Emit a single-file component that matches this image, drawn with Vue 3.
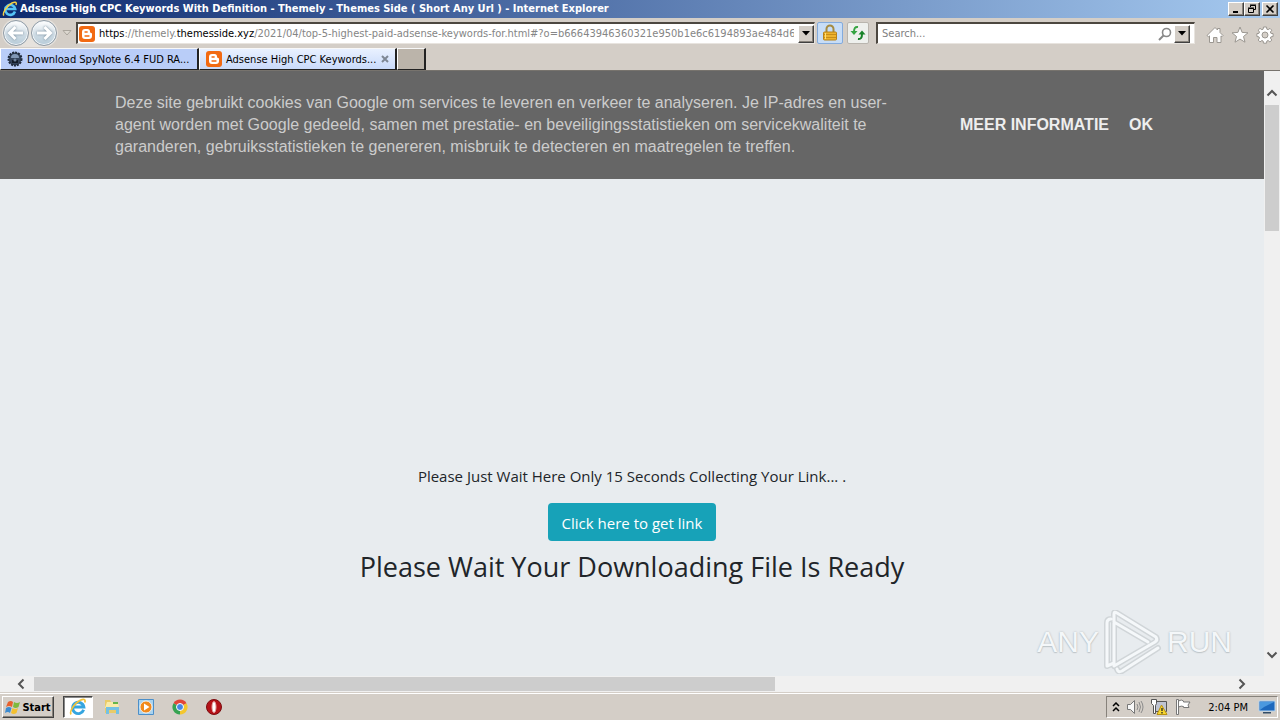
<script setup>
import { ref } from 'vue'

const query = ref('')
const host = 'themesside.xyz'
const path = '/2021/04/top-5-highest-paid-adsense-keywords-for.html#?o=b66643946360321e950b1e6c6194893ae484d65bc'
</script>

<template>
  <div class="desktop">
    <header class="titlebar">
      <svg class="i16" viewBox="0 0 16 16" aria-hidden="true">
        <path d="M13 10.500A5 5 0 1 1 13.200 8H4" fill="none" stroke="#55c3f5" stroke-width="2.600" />
        <path d="M2 14.500C0 13 4 5 10 2c3-1.500 5-1 4 2" fill="none" stroke="#f5cf45" stroke-width="1.500" />
      </svg>
      <h1>Adsense High CPC Keywords With Definition - Themely - Themes Side ( Short Any Url ) - Internet Explorer</h1>
      <div class="winbtns">
        <button class="raised" aria-label="Minimize"><svg viewBox="0 0 12 10"><path d="M3 7h5v2H3z" /></svg></button>
        <button class="raised" aria-label="Restore"><svg viewBox="0 0 12 10"><path d="M4.500 3V1.500h5v4H8M4 1h6M2.500 4.500h5v4h-5zM2 4h6" fill="none" stroke="#000" /></svg></button>
        <button class="raised close" aria-label="Close"><svg viewBox="0 0 12 10"><path d="M2.500 1.500l7 7M9.500 1.500l-7 7" fill="none" stroke="#000" stroke-width="1.600" /></svg></button>
      </div>
    </header>

    <nav class="navbar">
      <div class="history">
        <button class="round" aria-label="Back"><svg viewBox="0 0 24 24"><path d="M19 12H6M11.500 6L5.500 12l6 6" /></svg></button>
        <button class="round" aria-label="Forward"><svg viewBox="0 0 24 24"><path d="M5 12h13M12.500 6l6 6-6 6" /></svg></button>
      </div>
      <button class="recent" aria-label="Recent pages"><svg viewBox="0 0 10 6"><path d="M1 .5h8l-4 4.500z" fill="#ddd8d0" stroke="#aaa59d" /></svg></button>
      <div class="field address">
        <svg class="i16" viewBox="0 0 16 16" aria-hidden="true">
          <rect width="16" height="16" rx="3" fill="#f26a12" />
          <path d="M6 3h2.500A2.500 2.500 0 0 1 11 5.500c0 1 .4 1.300 1.200 1.400.6.100.8.400.8 1V10a3 3 0 0 1-3 3H6a3 3 0 0 1-3-3V6a3 3 0 0 1 3-3z" fill="#fff" />
          <path d="M6 6h2.200M6 10h4" stroke="#f26a12" stroke-width="1.300" stroke-linecap="round" />
        </svg>
        <div class="url" role="textbox" aria-label="Address" contenteditable="true" spellcheck="false"><b>https</b>://themely.<b>{{ host }}</b>{{ path }}</div>
        <button class="raised drop" aria-label="Show address list"><svg viewBox="0 0 8 5"><path d="M0 0h8L4 4.500z" /></svg></button>
      </div>
      <button class="tool lock" aria-label="Security report">
        <svg viewBox="0 0 18 18"><path d="M5.500 9V5a3.500 3.500 0 0 1 7 0v4" fill="none" stroke="#a58b42" stroke-width="2" /><rect x="2.500" y="8" width="13" height="8" rx="1" fill="#eeb32d" stroke="#b98216" /><path d="M3 10.500h12M3 13.500h12" stroke="#c88e18" /><path d="M4.500 9v6" stroke="#ffdf77" /></svg>
      </button>
      <button class="tool refresh" aria-label="Refresh">
        <svg viewBox="0 0 18 18"><path d="M9 3C6 2.500 5 4.500 5 8" fill="none" stroke="#35a442" stroke-width="2" /><path d="M1.500 7h7L5 11z" fill="#35a442" /><path d="M9 15c3 .5 4-1.500 4-5" fill="none" stroke="#188329" stroke-width="2" /><path d="M9.500 10.500h7L13 6.500z" fill="#188329" /></svg>
      </button>
      <div class="field search">
        <input v-model="query" type="text" aria-label="Search" placeholder="Search...">
        <button class="plain" aria-label="Go"><svg class="i14" viewBox="0 0 14 14"><circle cx="8.500" cy="5.500" r="4" fill="none" stroke="#888" stroke-width="1.600" /><path d="M5.500 8.500L1 13" stroke="#888" stroke-width="2" /></svg></button>
        <button class="raised drop" aria-label="Search options"><svg viewBox="0 0 8 5"><path d="M0 0h8L4 4.500z" /></svg></button>
      </div>
      <div class="commands">
        <button class="plain" aria-label="Home"><svg viewBox="0 0 18 18"><path d="M9 1.500l2.500 2.500V2.500h2.500v4L17 9.500l-1 1.200-1-.8v6.600h-4v-5H7.500v5h-4V9.900l-1 .8L1 9.500z" fill="#fff" stroke="#9b9791" /></svg></button>
        <button class="plain" aria-label="Favorites"><svg viewBox="0 0 18 18"><path d="M9 1l2.100 5.400 5.900.4-4.500 3.700 1.500 5.700L9 13.100l-5 3.100 1.500-5.700L1 6.800l5.900-.4z" fill="#fff" stroke="#9b9791" /></svg></button>
        <button class="plain" aria-label="Tools"><svg viewBox="0 0 18 18"><path d="M7.500 1h3l.4 2.200 1.200.5L14 2.400 15.800 4.200 14.400 6l.5 1.300 2.200.3v2.900l-2.200.4-.5 1.200 1.400 1.900-1.900 1.900-1.800-1.400-1.200.5-.4 2.200h-3L7.100 15l-1.200-.5L4 15.900 2.200 14l1.300-1.900-.5-1.200-2.100-.4V7.600L3 7.300 3.500 6 2.200 4.200 4 2.400l1.900 1.300 1.200-.5z" fill="#fff" stroke="#9b9791" /><circle cx="9" cy="9" r="3" fill="#d5cfc8" stroke="#9b9791" /></svg></button>
      </div>
    </nav>

    <div class="tabs" role="tablist">
      <button class="tab" role="tab" aria-selected="false">
        <svg class="i16" viewBox="0 0 16 16"><circle cx="8" cy="8" r="6.500" fill="#34435a" stroke="#202a3a" stroke-width="2" stroke-dasharray="2 1" /><path d="M4 7a4 4 0 0 1 8 0z" fill="#8197b5" /><path d="M5 9h6v3H5z" fill="#131b28" /><circle cx="8" cy="9" r="1.500" fill="#71849e" /></svg>
        <span>Download SpyNote 6.4 FUD RA...</span>
      </button>
      <button class="tab active" role="tab" aria-selected="true">
        <svg class="i16" viewBox="0 0 16 16">
          <rect width="16" height="16" rx="3" fill="#f26a12" />
          <path d="M6 3h2.500A2.500 2.500 0 0 1 11 5.500c0 1 .4 1.300 1.200 1.400.6.100.8.400.8 1V10a3 3 0 0 1-3 3H6a3 3 0 0 1-3-3V6a3 3 0 0 1 3-3z" fill="#fff" />
          <path d="M6 6h2.200M6 10h4" stroke="#f26a12" stroke-width="1.300" stroke-linecap="round" />
        </svg>
        <span>Adsense High CPC Keywords...</span>
        <svg class="x" viewBox="0 0 8 8"><path d="M1 1l6 6M7 1L1 7" stroke="#7e8794" stroke-width="2" /></svg>
      </button>
      <button class="tab newtab" aria-label="New tab"></button>
    </div>

    <div class="viewport">
      <main class="page">
        <section class="cookie">
          <p>Deze site gebruikt cookies van Google om services te leveren en verkeer te analyseren. Je IP-adres en user-agent worden met Google gedeeld, samen met prestatie- en beveiligingsstatistieken om servicekwaliteit te garanderen, gebruiksstatistieken te genereren, misbruik te detecteren en maatregelen te treffen.</p>
          <div class="links"><a href="#">MEER INFORMATIE</a><a href="#">OK</a></div>
        </section>
        <section class="wait">
          <p>Please Just Wait Here Only 15 Seconds Collecting Your Link... .</p>
          <button class="get">Click here to get link</button>
          <h2>Please Wait Your Downloading File Is Ready</h2>
        </section>
        <div class="watermark">
          <span>ANY</span>
          <svg viewBox="0 0 60 64" aria-hidden="true">
            <g fill="none" stroke-linejoin="round" stroke-linecap="round">
              <path d="M8 9Q4 9 4 13v43l7-3V4q0-3 3-1l39 24q2 3-1 5L11 56M11 12l34 20M14 59q1 4 5 2l36-23M11 12v41" stroke="#d0d5d8" stroke-width="6" />
              <path d="M8 9Q4 9 4 13v43l7-3V4q0-3 3-1l39 24q2 3-1 5L11 56M11 12l34 20M14 59q1 4 5 2l36-23M11 12v41" stroke="#f5f8fa" stroke-width="3" />
            </g>
          </svg>
          <span>RUN</span>
        </div>
      </main>
      <div class="vscroll">
        <button class="plain" aria-label="Scroll up"><svg viewBox="0 0 12 8"><path d="M1.500 6.500L6 2l4.500 4.500" /></svg></button>
        <div class="track"><div class="vthumb"></div></div>
        <button class="plain" aria-label="Scroll down"><svg viewBox="0 0 12 8"><path d="M1.500 1.500L6 6l4.500-4.500" /></svg></button>
      </div>
    </div>
    <div class="hscroll">
      <button class="plain" aria-label="Scroll left"><svg viewBox="0 0 8 12"><path d="M6.500 1.500L2 6l4.500 4.500" /></svg></button>
      <div class="track"><div class="hthumb"></div></div>
      <button class="plain" aria-label="Scroll right"><svg viewBox="0 0 8 12"><path d="M1.500 1.500L6 6l-4.500 4.500" /></svg></button>
    </div>

    <footer class="taskbar">
      <button class="raised start">
        <svg class="i16" viewBox="0 0 16 16"><path d="M3 3q3-2 5 0L7 8Q4 6 1 8z" fill="#e8602c" /><path d="M9 3q3 2 6 0l-1.500 5q-3 2-5.500 0z" fill="#7fb93c" /><path d="M1 9q3-2 5.500 0L5 14q-2-2-5 0z" fill="#3c8bd0" /><path d="M7.500 9q3 2 5.500 0l-1.500 5q-3 2-5.500 0z" fill="#f4c02f" /></svg>
        <span>Start</span>
      </button>
      <div class="quick">
        <button class="app on" aria-label="Internet Explorer"><svg class="i18" viewBox="0 0 16 16"><path d="M13 10.500A5 5 0 1 1 13.200 8H4" fill="none" stroke="#35a5df" stroke-width="2.600" /><path d="M2 14.500C0 13 4 5 10 2c3-1.500 5-1 4 2" fill="none" stroke="#f2c23a" stroke-width="1.500" /></svg></button>
        <button class="app" aria-label="File Explorer"><svg class="i18" viewBox="0 0 18 18"><path d="M2 2h5l1 2h7v11H2z" fill="#e9cb68" /><path d="M4 4h11l1 6H2z" fill="#f9eba9" /><path d="M3 16V9h13v7h-3v-4H6v4z" fill="#74c1e4" /><path d="M10 5h5" stroke="#65b54b" stroke-width="2" /></svg></button>
        <button class="app" aria-label="Media Player"><svg class="i18" viewBox="0 0 18 18"><path d="M1.500 1.500h15v15h-15z" fill="#a9d3ef" stroke="#4c8fc9" /><circle cx="9" cy="9" r="6" fill="#f18a1d" stroke="#fff" stroke-width=".8" /><path d="M7 5.500L12.500 9 7 12.500z" fill="#fff" /></svg></button>
        <button class="app" aria-label="Chrome"><svg class="i18" viewBox="0 0 18 18"><path d="M9 9L2.500 5.200A7.500 7.500 0 0 1 15.500 5.200z" fill="#e24638" /><path d="M9 9l6.500-3.800A7.500 7.500 0 0 1 9 16.500z" fill="#f4c72e" /><path d="M9 9v7.500A7.500 7.500 0 0 1 2.500 5.200z" fill="#36a352" /><circle cx="9" cy="9" r="3.500" fill="#4687e6" stroke="#fff" /></svg></button>
        <button class="app" aria-label="Opera"><svg class="i18" viewBox="0 0 18 18"><circle cx="9" cy="9" r="7.500" fill="#b51218" stroke="#7c0c10" /><ellipse cx="9" cy="9" rx="2" ry="5.500" fill="#fff" stroke="#e3a2a2" /></svg></button>
      </div>
      <div class="tray">
        <button class="plain" aria-label="Show hidden icons"><svg class="chev" viewBox="0 0 8 10"><path d="M1 4l3-3 3 3M1 9l3-3 3 3" fill="none" stroke="#000" stroke-width="1.500" /></svg></button>
        <svg class="i18" viewBox="0 0 18 18"><path d="M1.500 6.500h3l4-4v13l-4-4h-3z" fill="#f8f8f8" stroke="#777" /><path d="M11 6q2 3 0 6M13 4q3 5 0 10M15 3q4 6 0 12" fill="none" stroke="#8b8b8b" /></svg>
        <svg class="i18" viewBox="0 0 18 18"><path d="M5.500 3.500h11v10h-11z" fill="#bfc4d2" stroke="#555" /><path d="M1.500 1.500h5v4l-1 2v8h-2v-8l-2-2z" fill="#fff" stroke="#555" /><path d="M11.500 7l5.500 9.500H7z" fill="#f6d62f" stroke="#b99110" /><path d="M12 10v3M12 14v1.500" stroke="#222" stroke-width="1.300" /></svg>
        <svg class="i18" viewBox="0 0 18 18"><path d="M2.500 1.500h2v15h-2zM4.500 3q3-2 5 0v1h6.500l-2 3 1 2.500H9.500V8.500q-2-1-5 .5z" fill="#fff" stroke="#777" /></svg>
        <time>2:04 PM</time>
        <svg class="i18" viewBox="0 0 18 18"><path d="M1 3h16v10H1z" fill="#1d68bd" stroke="#b9d5ed" /><path d="M2 4h14L6 9 2 12z" fill="#4a98df" /><path d="M5 14h8v1.500H5z" fill="#334c66" /></svg>
      </div>
    </footer>
  </div>
</template>

<style>
body { margin: 0; }
</style>

<style scoped>
* { box-sizing: border-box; }
.desktop { display: flex; flex-direction: column; height: 100vh; overflow: hidden; background: #d4cec7; color: #000; font: 11px "DejaVu Sans Condensed", "DejaVu Sans", sans-serif; }
button { font: inherit; color: inherit; padding: 0; margin: 0; border: 0; background: none; flex: none; }
svg { display: block; flex: none; }
.i14 { width: 14px; height: 14px; }
.i16 { width: 16px; height: 16px; }
.i18 { width: 18px; height: 18px; }
.plain { display: flex; align-items: center; justify-content: center; }
.raised { display: flex; align-items: center; justify-content: center; background: #d4cec7; border: 1px solid; border-color: #fff #404040 #404040 #fff; box-shadow: inset -1px -1px #87827b; }

.titlebar { display: flex; align-items: center; gap: 2px; height: 18px; flex: none; padding: 0 2px; background: linear-gradient(90deg, #0d2a6f, #a6caf0); color: #fff; }
.titlebar h1 { flex: 1; margin: 0; font-size: 11px; font-weight: bold; line-height: 16px; white-space: nowrap; overflow: hidden; }
.winbtns { display: flex; }
.winbtns button { width: 16px; height: 14px; }
.winbtns svg { width: 12px; height: 10px; }
.winbtns .close { margin-left: 2px; }

.navbar { display: flex; align-items: center; height: 30px; flex: none; padding: 0 6px 0 2px; }
.history { display: flex; gap: 2px; padding: 1px; border-radius: 14px; background: #e6e2dd; }
.round { width: 26px; height: 26px; border-radius: 50%; border: 1px solid #8d9aa5; background: linear-gradient(#fff, #cfdce5 55%, #b7cbd8); box-shadow: inset 0 0 0 1px #f4f7f9; }
.round svg { width: 24px; height: 24px; fill: none; }
.round path { stroke: #fff; stroke-width: 3; filter: drop-shadow(0 0 1px #6e8495); }
.recent { width: 18px; display: flex; justify-content: center; }
.recent svg { width: 10px; height: 6px; }
.field { display: flex; align-items: center; height: 22px; background: #fff; border: 1px solid; border-width: 2px 1px 1px 2px; border-color: #4c4740 #e8e4df #e8e4df #4c4740; }
.address { flex: 1; min-width: 0; gap: 4px; padding-left: 1px; }
.address .url { flex: 1; min-width: 0; white-space: nowrap; overflow: hidden; color: #858585; line-height: 16px; outline: 0; }
.url b { font-weight: normal; color: #000; }
.drop { width: 16px; height: 18px; }
.drop svg { width: 8px; height: 5px; }
.tool { display: flex; align-items: center; justify-content: center; height: 22px; border: 1px solid #b9b5ae; border-radius: 2px; background: #eef0ed; }
.tool svg { width: 18px; height: 18px; }
.lock { width: 26px; margin-left: 2px; border-color: #83abdd; background: #c7ddf7; }
.refresh { width: 22px; margin-left: 4px; }
.search { width: 319px; margin-left: 7px; padding-right: 4px; }
.search input { flex: 1; min-width: 0; border: 0; padding: 0 4px; font: inherit; background: transparent; outline: 0; }
.search input::placeholder { color: #808080; opacity: 1; }
.search .plain { margin-right: 2px; }
.commands { display: flex; gap: 7px; margin-left: 11px; padding-top: 3px; }
.commands svg { width: 18px; height: 18px; }

.tabs { display: flex; height: 23px; flex: none; border-bottom: 1px solid #77736d; }
.tab { display: flex; align-items: center; gap: 4px; width: 199px; height: 22px; padding: 0 6px; border: 1px solid; border-width: 1px 2px 1px 1px; border-color: #f8f8f8 #222 #222 #fff; background: #b9cdf8; text-align: left; white-space: nowrap; }
.tab span { flex: 1; }
.tab.active { width: 198px; background: linear-gradient(#e9f1ff, #c9dafa); }
.tab .x { width: 8px; height: 8px; }
.tab.newtab { width: 29px; background: #bbb4aa; }

.viewport { display: flex; flex: 1; min-height: 0; }
.page { position: relative; flex: 1; min-width: 0; background: #e8ecef; color: #212529; overflow: hidden; }
.cookie { display: flex; align-items: center; justify-content: space-between; height: 108px; padding: 0 111px 0 115px; background: #666; font: 16px/22px "Liberation Sans", Arial, sans-serif; }
.cookie p { max-width: 780px; margin: 0; color: #ccc; }
.links { display: flex; gap: 20px; }
.links a { color: #eee; font-weight: bold; text-decoration: none; white-space: nowrap; }
.wait { display: flex; flex-direction: column; align-items: center; padding-top: 285px; font: 15px/24px "Open Sans", "Noto Sans", sans-serif; }
.wait p { margin: 0 0 15px; }
.get { padding: 8px 14px 6px; border-radius: 4px; background: #17a2b8; color: #fff; line-height: 24px; }
.wait h2 { margin: 9px 0 0; font-size: 27px; font-weight: normal; line-height: 34px; }
.watermark { position: absolute; right: 32px; bottom: 2px; display: flex; align-items: center; gap: 4px; font: 30px/40px "Liberation Sans Narrow", "Liberation Sans", sans-serif; color: #f4f7f9; text-shadow: 0 0 2px #adb5ba, 0 1px 1px #c5cbce; }
.watermark svg { width: 60px; height: 64px; }

.vscroll { display: flex; flex-direction: column; width: 16px; flex: none; background: #f0f0f0; }
.vscroll button { height: 34px; padding-top: 10px; }
.vscroll button:last-child { padding: 2px 0 0; height: 44px; }
.vscroll svg { width: 12px; height: 8px; }
.vscroll path, .hscroll path { fill: none; stroke: #555; stroke-width: 2; }
.track { flex: 1; }
.vthumb { width: 14px; height: 24%; margin: 0 auto; background: #cdcdcd; }
.hscroll { display: flex; align-items: center; height: 17px; flex: none; background: #f0f0f0; border-bottom: 1px solid #f0f0f0; padding-right: 16px; }
.hscroll button { width: 34px; height: 16px; padding-left: 8px; }
.hscroll button:last-child { padding: 0; width: 44px; }
.hscroll svg { width: 8px; height: 12px; }
.hthumb { width: 62.5%; height: 14px; background: #cdcdcd; }

.taskbar { display: flex; align-items: center; height: 27px; flex: none; border-top: 1px solid #fff; box-shadow: 0 -1px #d4cec7; }
.start { gap: 1px; width: 52px; height: 22px; margin-left: 2px; font-weight: bold; }
.quick { display: flex; flex: 1; gap: 4px; margin-left: 9px; }
.app { display: flex; align-items: center; justify-content: center; width: 30px; height: 22px; }
.app.on { background: #fff; border: 1px solid; border-color: #444 #fff #fff #444; box-shadow: inset 1px 1px #888; }
.tray { display: flex; align-items: center; gap: 6px; height: 22px; margin-right: 2px; padding: 0 1px 0 5px; border: 1px solid; border-color: #87827b #fff #fff #87827b; }
.chev { width: 8px; height: 10px; }
.tray time { margin: 0 4px 0 10px; white-space: nowrap; }
</style>
